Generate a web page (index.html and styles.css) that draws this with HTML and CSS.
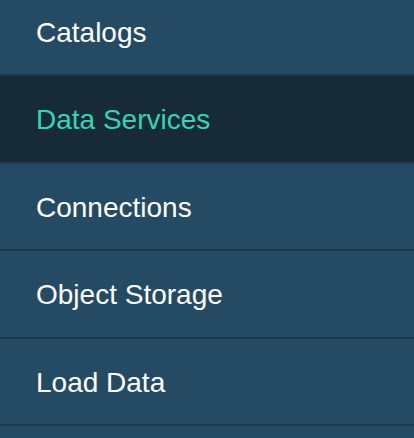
FILE: index.html
```html
<!DOCTYPE html>
<html>
<head>
<meta charset="utf-8">
<link rel="stylesheet" href="styles.css">
</head>
<body>
<nav class="menu">
  <a class="item">Catalogs</a>
  <a class="item active">Data Services</a>
  <a class="item">Connections</a>
  <a class="item">Object Storage</a>
  <a class="item">Load Data</a>
</nav>
</body>
</html>
```
FILE: styles.css
```css
html, body {
  margin: 0;
  padding: 0;
  background: #244b63;
  overflow: hidden;
}
.menu {
  display: flex;
  flex-direction: column;
  margin-top: -11.5px;
}
.item {
  display: flex;
  align-items: center;
  box-sizing: border-box;
  height: 87.5px;
  padding: 3px 0 0 36px;
  border-bottom: 2px solid #1c3a4f;
  background: #244b63;
  color: #ffffff;
  font-family: "Liberation Sans", Arial, sans-serif;
  font-size: 28px;
  flex-shrink: 0;
}
.item.active {
  background: #162a38;
  color: #38d2b7;
}
```
